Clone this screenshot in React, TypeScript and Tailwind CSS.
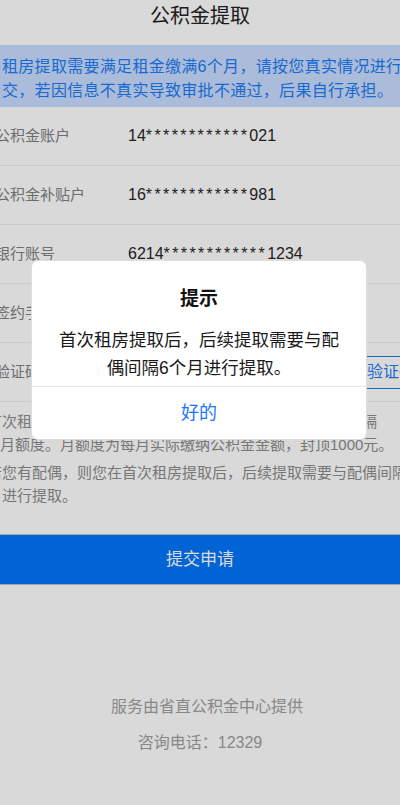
import React from 'react';

const rows = [
  { label: '公积金账户', head: '14', tail: '021' },
  { label: '公积金补贴户', head: '16', tail: '981' },
  { label: '银行账号', head: '6214', tail: '1234' },
  { label: '签约手机号', head: '138', tail: '5678' },
];

export default function App() {
  return (
    <div
      className="relative w-[400px] h-[805px] overflow-hidden bg-white"
      style={{ fontFamily: '"Liberation Sans", "Noto Sans CJK SC", sans-serif' }}
    >
      {/* header */}
      <div className="h-[45px] pt-[2px] flex justify-center text-[20px] leading-[28px] text-[#222]">
        公积金提取
      </div>

      {/* notice */}
      <div className="h-[62px] bg-[#c8ddff] pt-[10px] pl-[2px] text-[16px] leading-[24px] tracking-[0.3px] text-[#1f7cf5] whitespace-nowrap overflow-hidden">
        <div>租房提取需要满足租金缴满6个月，请按您真实情况进行提</div>
        <div>交，若因信息不真实导致审批不通过，后果自行承担。</div>
      </div>

      {/* form rows */}
      <div>
        {rows.map((r) => (
          <div key={r.label} className="h-[59px] flex items-center border-b border-[#efefef]">
            <div className="w-[133px] -ml-[5px] shrink-0 text-[15px] text-[#808080] whitespace-nowrap">
              {r.label}
            </div>
            <div className="text-[16px] text-[#262626] whitespace-nowrap">
              {r.head}
              <span className="tracking-[2.4px]">************</span>
              {r.tail}
            </div>
          </div>
        ))}
        <div className="h-[59px] flex items-center border-b border-[#efefef]">
          <div className="w-[133px] -ml-[5px] shrink-0 text-[15px] text-[#808080] whitespace-nowrap">验证码</div>
          <div className="flex-1 text-[16px] text-[#bbb]">请输入验证码</div>
          <div className="h-[33px] -mr-[24px] px-[8px] flex items-center border border-[#1f7cf5] rounded-[3px] text-[16px] text-[#1f7cf5] whitespace-nowrap">
            获取验证码
          </div>
        </div>
      </div>

      {/* tips */}
      <div className="pt-[9px] -ml-[13px] text-[15px] leading-[22.5px] text-[#8c8c8c] whitespace-nowrap">
        <div>首次租房提取后可提取当年租金，之后按月提取，每次间隔</div>
        <div className="pl-[13px]">月额度。月额度为每月实际缴纳公积金金额，封顶1000元。</div>
        <div className="mt-[6px]">若您有配偶，则您在首次租房提取后，后续提取需要与配偶间隔6个</div>
        <div>月进行提取。</div>
      </div>

      {/* submit */}
      <div className="mt-[27px] h-[51px] flex items-center justify-center bg-[#0076fb] border-y border-[#c4c4c4] text-[17px] text-white">
        提交申请
      </div>

      {/* footer */}
      <div className="mt-[110px] flex flex-col items-center text-[16px] leading-[24px] text-[#a0a0a0]">
        <div className="pl-[14px]">服务由省直公积金中心提供</div>
        <div className="mt-[12px]">咨询电话：12329</div>
      </div>

      {/* overlay */}
      <div className="absolute inset-0 bg-black/15" />

      {/* dialog */}
      <div className="absolute top-[260px] left-[31px] w-[336px] bg-white rounded-[7px] border border-[#c8c8c8]/60 overflow-hidden">
        <div className="pt-[24px] px-[24px] pb-[4px] text-center">
          <div className="text-[19px] leading-[28px] font-bold text-[#111]">提示</div>
          <div className="mt-[13px] text-[17.5px] leading-[28px] text-[#1a1a1a]">
            首次租房提取后，后续提取需要与配偶间隔6个月进行提取。
          </div>
        </div>
        <div className="h-[53px] border-t border-[#e8e8e8] flex items-center justify-center text-[18px] text-[#1677ff]">
          好的
        </div>
      </div>
    </div>
  );
}
